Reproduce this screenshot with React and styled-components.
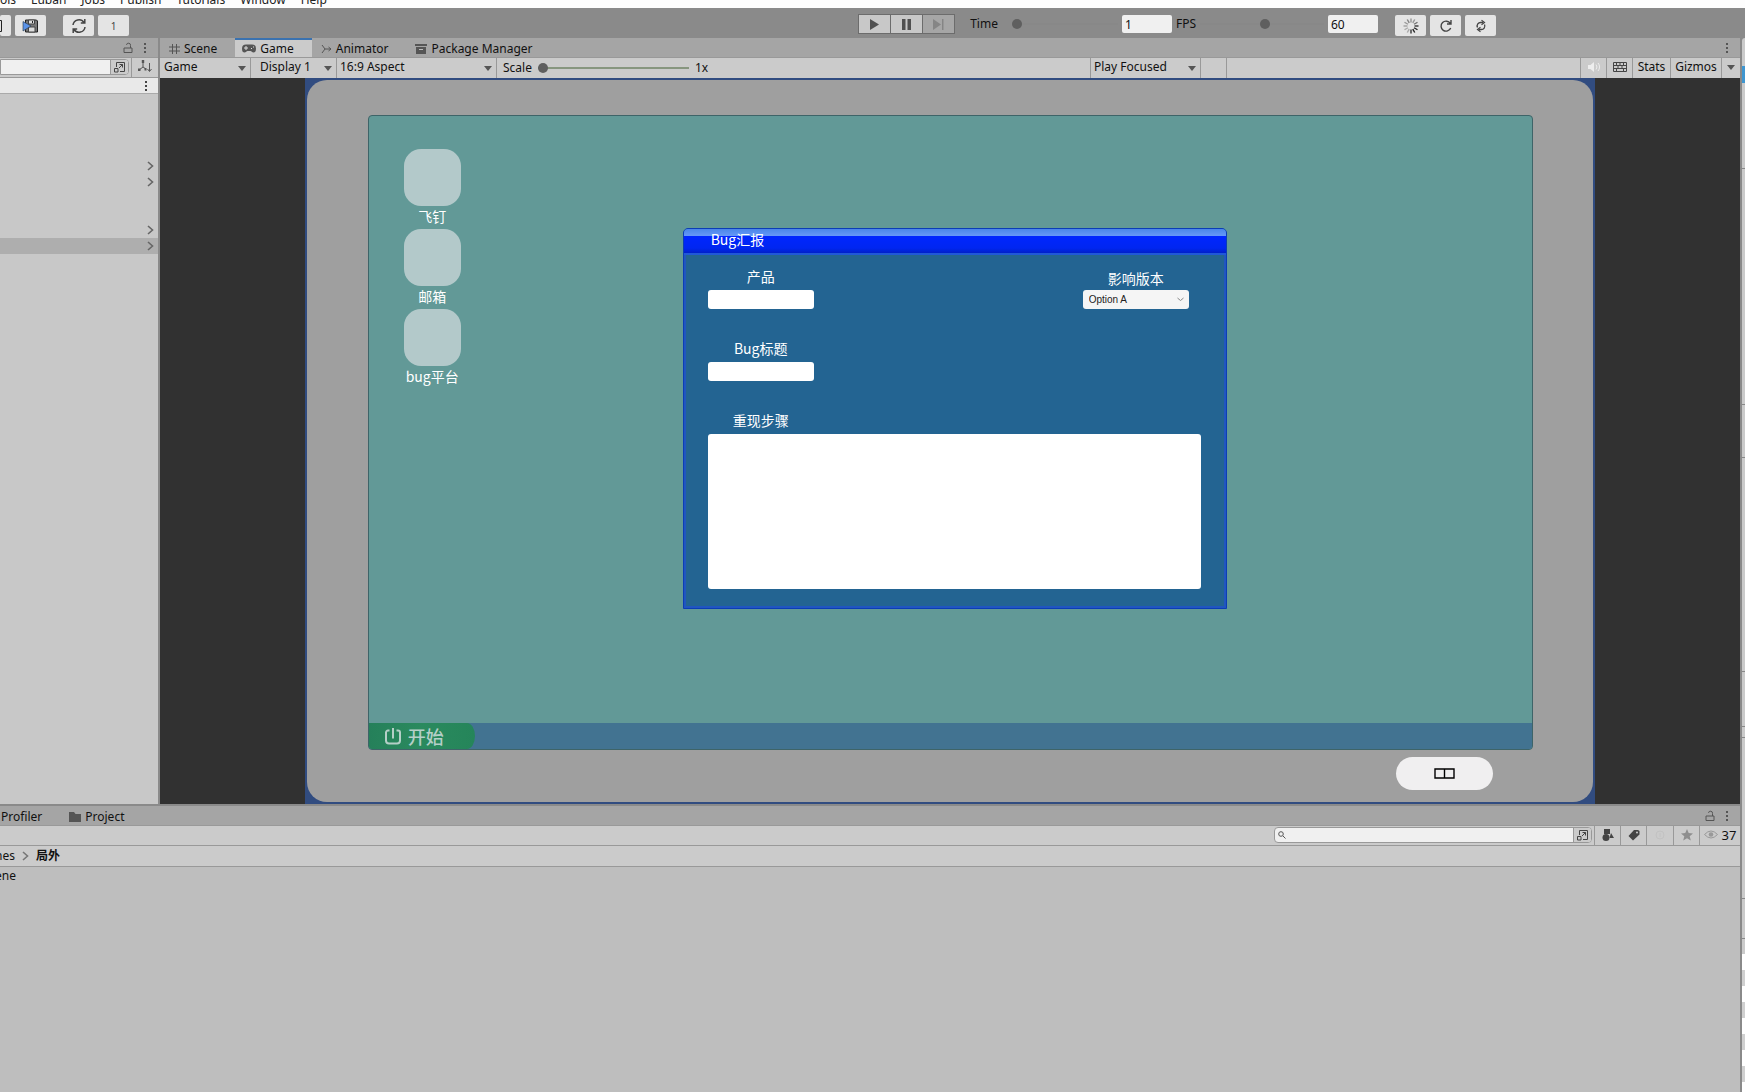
import React, { useState } from 'react';
import styled, { createGlobalStyle } from 'styled-components';

const GlobalStyle = createGlobalStyle`
  * {
    box-sizing: border-box;
  }
  body {
    margin: 0;
    background: #c0c0c0;
    color: #111;
    font-family: 'Noto Sans', 'Noto Sans CJK SC', sans-serif;
    font-size: 12px;
    line-height: 16px;
  }
  button, input, select, textarea {
    font: inherit;
    color: inherit;
    margin: 0;
    padding: 0;
    border: 0;
    border-radius: 0;
    outline: 0;
  }
  svg {
    display: block;
    flex: none;
  }
`;

//  //  //  //  //  //  //
// PAGE STRUCTURE       //
//  //  //  //  //  //  //

const Editor = styled.div`
  display: flex;
  flex-direction: column;
  height: 100vh;
  overflow: hidden;
`;

const MenuBar = styled.nav`
  display: flex;
  flex: none;
  align-items: flex-end;
  gap: 15px;
  height: 8px;
  overflow: hidden;
  background: #fdfdfd;
`;

const MenuLink = styled.a`
  color: #222;
  text-decoration: none;
  line-height: 16px;
`;

const Toolbar = styled.header`
  display: flex;
  flex: none;
  justify-content: space-between;
  height: 30px;
  padding: 0 249px 0 0;
  background: #8a8a8a;
`;

const ToolGroup = styled.div`
  display: flex;
  align-items: flex-start;
  gap: 4px;
  padding-top: 7px;
`;

const ToolButton = styled.button`
  display: flex;
  align-items: center;
  justify-content: ${(props) => props.justify || 'center'};
  width: ${(props) => props.width || 31}px;
  height: 21px;
  border-radius: 2px;
  background: #e4e4e4;
  color: #444;
  font-size: 10px;
`;

const ToolSpacer = styled.span`
  width: ${(props) => props.width}px;
`;

const PlayButtons = styled.div`
  display: flex;
  gap: 1px;
  height: 20px;
  margin: -1px 11px 0 0;
  padding: 1px;
  background: #6c6c6c;
`;

const PlayButton = styled.button`
  display: flex;
  align-items: center;
  justify-content: center;
  width: 31px;
  background: ${(props) => (props.disabled ? '#a6a6a6' : '#c8c8c8')};
  color: ${(props) => (props.disabled ? '#858585' : '#505050')};
`;

const ToolLabel = styled.label`
  line-height: 18px;
`;

const NumberField = styled.input`
  width: 50px;
  height: 18px;
  padding: 0 3px;
  border-radius: 2px;
  background: #f0f0f0;
`;

const Range = styled.input`
  appearance: none;
  width: ${(props) => props.width}px;
  height: 18px;
  background: linear-gradient(${(props) => props.track}, ${(props) => props.track}) no-repeat center / 100% 2px;
  &::-webkit-slider-thumb {
    appearance: none;
    width: 10px;
    height: 10px;
    border-radius: 50%;
    background: #5f5f5f;
  }
`;

const Workspace = styled.div`
  display: flex;
  flex: 1;
  min-height: 0;
  background: #8a8a8a;
`;

const MainColumn = styled.div`
  display: flex;
  flex: 1;
  flex-direction: column;
  min-width: 0;
`;

const TopPanels = styled.div`
  display: flex;
  flex: 1;
  gap: 2px;
  min-height: 0;
`;

const Panel = styled.section`
  display: flex;
  flex: ${(props) => (props.width ? `0 0 ${props.width}px` : '1')};
  flex-direction: column;
  min-width: 0;
  background: #c8c8c8;
`;

const BottomPanel = styled(Panel)`
  flex: none;
  height: 288px;
  background: #bebebe;
`;

const TabBar = styled.div`
  display: flex;
  flex: none;
  align-items: stretch;
  height: ${(props) => props.height || 19}px;
  padding-right: 11px;
  background: #a5a5a5;
  ${(props) => props.line && 'border-top: 2px solid #8a8a8a;'}
`;

const Tab = styled.button`
  display: flex;
  align-items: center;
  gap: 4px;
  padding: ${(props) => (props.selected ? '0 18px 0 7px' : '2px 18px 0 9px')};
  border-top: ${(props) => (props.selected ? '2px solid #3a72b0' : '0')};
  background: ${(props) => (props.selected ? '#cbcbcb' : 'transparent')};
  white-space: nowrap;
  svg {
    color: #555;
  }
`;

const CutTab = styled(Tab)`
  padding-left: 1px;
`;

const TabTools = styled.div`
  display: flex;
  align-items: center;
  gap: 10px;
  margin-left: auto;
  color: #555;
`;

const PlainButton = styled.button`
  display: flex;
  align-items: center;
  justify-content: center;
  background: transparent;
`;

const Strip = styled.div`
  display: flex;
  flex: none;
  align-items: stretch;
  height: ${(props) => props.height || 21}px;
  background: #cbcbcb;
  border-top: 1px solid #999;
  ${(props) => props.line && 'border-bottom: 1px solid #999;'}
`;

const Cell = styled.div`
  display: flex;
  align-items: center;
  justify-content: ${(props) => props.justify || 'flex-start'};
  flex: ${(props) => (props.width ? `0 0 ${props.width}px` : '1')};
  gap: 6px;
  min-width: 0;
  padding: 0 ${(props) => props.pad || 0}px 1px;
  border-right: 1px solid #999;
`;

const CellButton = styled.button`
  display: flex;
  align-items: center;
  justify-content: center;
  gap: 4px;
  flex: 0 0 ${(props) => props.width}px;
  padding-bottom: 2px;
  border-right: ${(props) => (props.last ? '0' : '1px solid #999')};
  background: transparent;
  color: ${(props) => props.tone || '#111'};
`;

const DropDown = styled.div`
  display: grid;
  flex: 0 0 ${(props) => props.width}px;
  align-items: center;
  border-right: 1px solid #999;
  > * {
    grid-area: 1 / 1;
  }
  svg {
    justify-self: end;
    margin-right: ${(props) => (props.form ? 5 : 4)}px;
    pointer-events: none;
    color: #555;
  }
`;

const DropSelect = styled.select`
  appearance: none;
  width: 100%;
  height: 18px;
  padding-left: ${(props) => props.indent || 4}px;
  background: transparent;
`;

const StripSelect = styled(DropSelect)`
  padding-bottom: 2px;
`;

//  //  //  //  //  //  //
// HIERARCHY            //
//  //  //  //  //  //  //

const SearchBox = styled.div`
  display: flex;
  align-items: center;
  flex: ${(props) => (props.width ? `0 0 ${props.width}px` : '1')};
  min-width: 0;
  height: 16px;
  margin-right: 2px;
  overflow: hidden;
  border: 1px solid #999;
  border-radius: ${(props) => (props.width ? '4px' : '0 4px 4px 0')};
  background: #f0f0f0;
  > svg {
    margin: 0 3px;
    color: #555;
  }
`;

const SearchInput = styled.input`
  flex: 1;
  min-width: 0;
  height: 14px;
  background: transparent;
`;

const PickerButton = styled.button`
  display: flex;
  flex: none;
  align-items: center;
  justify-content: center;
  width: 18px;
  height: 14px;
  border-left: 1px solid #999;
  background: #cbcbcb;
  color: #444;
`;

const SceneHeader = styled.div`
  display: flex;
  flex: none;
  align-items: center;
  justify-content: flex-end;
  height: 17px;
  padding-right: 10px;
  background: #e9e9e9;
  border-top: 1px solid #999;
  border-bottom: 1px solid #aaa;
  color: #444;
`;

const Tree = styled.ul`
  margin: 0;
  padding: 0;
  list-style: none;
`;

const TreeRow = styled.li`
  display: flex;
  align-items: center;
  justify-content: flex-end;
  height: 16px;
  padding-right: 4px;
  background: ${(props) => (props.selected ? '#aeaeae' : 'transparent')};
  color: #666;
`;

//  //  //  //  //  //  //
// GAME VIEW            //
//  //  //  //  //  //  //

const GameView = styled.div`
  display: flex;
  flex: 1;
  justify-content: center;
  min-height: 0;
  background: #313131;
`;

const Camera = styled.div`
  height: 100%;
  max-width: 100%;
  aspect-ratio: 16 / 9;
  padding: 2px;
  background: #314c80;
`;

const Monitor = styled.div`
  display: flex;
  flex-direction: column;
  height: 100%;
  padding: 35px 60px 0 61px;
  border-radius: 20px;
  background: #9f9f9f;
`;

const Desktop = styled.div`
  position: relative;
  display: flex;
  flex: 1;
  flex-direction: column;
  justify-content: space-between;
  border: 1px solid #3e6468;
  border-radius: 4px;
  overflow: hidden;
  background: #629997;
  font-family: 'Noto Sans CJK SC', sans-serif;
`;

const Shortcuts = styled.div`
  display: flex;
  flex-direction: column;
  align-items: flex-start;
  padding: 33px 0 0 35px;
`;

const Shortcut = styled.button`
  display: flex;
  flex-direction: column;
  align-items: center;
  gap: 1px;
  width: 57px;
  height: 80px;
  background: transparent;
  color: #fff;
  font-size: 14px;
  line-height: 18px;
  white-space: nowrap;
`;

const ShortcutTile = styled.span`
  width: 57px;
  height: 57px;
  border-radius: 17px;
  background: #b3c9ca;
`;

const Taskbar = styled.div`
  display: flex;
  height: 26px;
  background: #427391;
`;

const StartButton = styled.button`
  display: flex;
  align-items: center;
  gap: 6px;
  width: 106px;
  padding-left: 15px;
  border-radius: 0 8px 8px 0 / 0 13px 13px 0;
  background: linear-gradient(90deg, #25805a, #2a8a5e 50%, #25855a);
  color: #b5cfc8;
  font-size: 18px;
  font-weight: 500;
  line-height: 24px;
`;

const MonitorBase = styled.div`
  display: flex;
  flex: none;
  justify-content: flex-end;
  height: 52px;
  padding: 7px 40px 0 0;
`;

const PowerPill = styled.button`
  display: flex;
  align-items: center;
  justify-content: center;
  width: 97px;
  height: 33px;
  border-radius: 17px;
  background: #f0eff0;
  color: #000;
`;

const BugWindow = styled.form`
  position: absolute;
  top: 112px;
  left: 314px;
  width: 544px;
  overflow: hidden;
  border: 1px solid #0c3db5;
  border-radius: 5px 5px 0 0;
  background: #236492;
  box-shadow: inset 0 0 0 2px #2056c0;
  color: #fff;
  font-size: 14px;
  line-height: 18px;
`;

const BugTitle = styled.h1`
  height: 26px;
  margin: 0;
  padding: 1px 27px;
  border-bottom: 2px solid #2058d8;
  background: linear-gradient(#4a86e8, #6698f8 7px, #0026ff 7px, #0026f0 80%, #0020c8);
  font-size: 14px;
  font-weight: 400;
  line-height: 18px;
`;

const BugBody = styled.div`
  display: flex;
  flex-direction: column;
  gap: 30px;
  padding: 12px 25px 19px 24px;
`;

const BugRow = styled.div`
  display: flex;
  align-items: flex-end;
  justify-content: space-between;
  padding-right: 12px;
`;

const Field = styled.div`
  display: flex;
  flex-direction: column;
  gap: ${(props) => (props.tight ? 3 : 5)}px;
`;

const FieldLabel = styled.label`
  width: 106px;
  text-align: center;
`;

const TextField = styled.input`
  width: 106px;
  height: 19px;
  padding: 0 5px;
  border-radius: 3px;
  background: #fff;
  color: #222;
  font-size: 10px;
`;

const StepsField = styled.textarea`
  display: block;
  width: 100%;
  height: 155px;
  padding: 4px 5px;
  resize: none;
  border-radius: 3px;
  background: #fff;
  color: #222;
  font-size: 10px;
`;

const VersionDrop = styled(DropDown)`
  flex: none;
  width: 106px;
  height: 19px;
  border: 0;
  border-radius: 3px;
  background: #f5f5f5;
`;

const VersionSelect = styled(DropSelect)`
  color: #222;
  font-family: 'Liberation Sans', sans-serif;
  font-size: 10px;
`;

//  //  //  //  //  //  //
// PROJECT              //
//  //  //  //  //  //  //

// the column is scrolled a little to the right
const Crumbs = styled.div`
  display: flex;
  align-items: center;
  gap: 7px;
  margin-left: -5px;
  svg {
    color: #777;
  }
`;

const CrumbLink = styled.a`
  color: #111;
  text-decoration: none;
`;

const Current = styled.strong`
  font-weight: 700;
`;

const FileRow = styled.div`
  margin-left: -5px;
  line-height: 18px;
`;

const Count = styled.span`
  font-size: 13px;
`;

// edge of the docked inspector on the right
const InspectorEdge = styled.aside`
  display: flex;
  flex: 0 0 3px;
  flex-direction: column;
  margin-left: 2px;
  border-top-left-radius: 3px;
  background: #cbcbcb;
`;

const EdgeBlock = styled.span`
  flex: 0 0 ${(props) => props.height}px;
  background: ${(props) => props.color || 'transparent'};
  border-bottom: ${(props) => (props.line ? '1px solid #888' : '0')};
`;

const EdgeStripes = styled.span`
  flex: 1;
  background: repeating-linear-gradient(#fff 0 16px, #d0d0d0 16px 32px);
`;

//  //  //  //  //  //  //
// ICONS                //
//  //  //  //  //  //  //

function Icon({ w = 12, h = 12, children }) {
  return (
    <svg
      width={w}
      height={h}
      viewBox={`0 0 ${w} ${h}`}
      fill="none"
      stroke="currentColor"
      aria-hidden="true"
    >
      {children}
    </svg>
  );
}

const Kebab = () => (
  <Icon w={4} h={12}>
    <path d="M1 1h2v2H1zM1 5h2v2H1zM1 9h2v2H1z" fill="currentColor" stroke="none" />
  </Icon>
);

const Lock = () => (
  <Icon w={10} h={12}>
    <path d="M1 6h8v4.500H1zM7.500 6V3.500a2 2 0 0 0-4-.6" />
  </Icon>
);

const Caret = () => (
  <Icon w={8} h={5}>
    <path d="M0 0h8L4 5z" fill="currentColor" stroke="none" />
  </Icon>
);

const Chevron = () => (
  <Icon w={7} h={10}>
    <path d="M1 1l4.500 4L1 9" strokeWidth="1.600" />
  </Icon>
);

const Picker = () => (
  <Icon w={13} h={12}>
    <path d="M3.500 6V1.500h8v9H7M1.500 7.500h3.500v3.500H1.500zM6 7l3.500-3.500M6.500 3.500h3v3" />
  </Icon>
);

const SortIcon = () => (
  <Icon w={14} h={13}>
    <path d="M5 1v6M5 7L1 10M5 7l3 2M11.500 3v8M9.500 9l2 2.500 2-2.500" />
    <path d="M3.800 0h2.400v3H3.800zM0 8.500h2.500V11H0zM6.500 8h2v2.500h-2z" fill="currentColor" stroke="none" />
  </Icon>
);

const FloppyEdge = () => (
  <Icon w={3} h={14}>
    <path d="M0 1.500h1.500v11H0" stroke="#222" />
  </Icon>
);

const Floppy = () => (
  <Icon w={17} h={14}>
    <path d="M3.500 1h11l1 1v11h-12z" fill="#777" stroke="#222" />
    <path d="M6.500 1h6v4h-6zM6.500 8h6.500v5H6.500z" fill="#ddd" stroke="#444" />
    <path d="M10.500 2v2" stroke="#222" />
    <path d="M1 2.500L9 7l-8 5z" fill="#5b93e8" stroke="#234" strokeWidth=".6" />
  </Icon>
);

const Sync = () => (
  <Icon w={16} h={16}>
    <path d="M2 7a6 6 0 0 1 11-2.500M14 9a6 6 0 0 1-11 2.500M13.800 1v4H9.800M2.200 15v-4h4" strokeWidth="1.500" />
  </Icon>
);

const Reload = () => (
  <Icon w={14} h={14}>
    <path d="M11.700 9a5 5 0 1 1-.4-4.500M12 1v4H8" strokeWidth="1.400" />
  </Icon>
);

const Swap = () => (
  <Icon w={12} h={14}>
    <path d="M2.500 8.500a3.500 3.500 0 0 1 3.500-5h2M9.500 5.500a3.500 3.500 0 0 1-3.500 5H4" strokeWidth="1.300" />
    <path d="M6.500 1.200L9.500 3.500l-3 2.300M5.500 8.200L2.500 10.500l3 2.300" strokeWidth="1.200" />
  </Icon>
);

// spokes are darkest at the lower right
const Spinner = () => (
  <Icon w={16} h={16}>
    {[0.4, 0.4, 0.6, 0.9, 1, 1, 0.9, 0.3, 0.3, 0.35, 0.4, 0.5].map((opacity, n) => (
      <path
        key={n}
        d="M8 .5v4"
        strokeWidth="1.400"
        stroke="#222"
        strokeOpacity={opacity}
        transform={`rotate(${n * 30} 8 8)`}
      />
    ))}
  </Icon>
);

const GridIcon = () => (
  <Icon w={11} h={12}>
    <path d="M3.500 1v10M7.500 1v10M0 4h11M0 8h11" />
  </Icon>
);

const Pad = () => (
  <Icon w={14} h={9}>
    <path d="M4 .5h6a4 4 0 0 1 4 4c0 3-1 4-2.500 4S9.500 7 8.500 7h-3C4.500 7 4 8.500 2.500 8.500S0 7.500 0 4.500a4 4 0 0 1 4-4z" fill="currentColor" stroke="none" />
    <path d="M2 4h4M4 2v4M9 4.500h1M11 3h1" stroke="#ddd" />
  </Icon>
);

const AnimatorIcon = () => (
  <Icon w={11} h={10}>
    <path d="M1 1l3 4-3 4M4 5h6M7.500 3L10 5 7.500 7" />
  </Icon>
);

const PackageIcon = () => (
  <Icon w={12} h={10}>
    <path d="M0 0h12v2H0zM1 3h10v7H1z" fill="currentColor" stroke="none" />
    <path d="M4 5.500h4" stroke="#bbb" />
  </Icon>
);

const Folder = () => (
  <Icon w={12} h={10}>
    <path d="M0 0h5l1.500 2H12v8H0z" fill="currentColor" stroke="none" />
  </Icon>
);

const Speaker = () => (
  <Icon w={14} h={12}>
    <path d="M1 4h2.500L7 1v10L3.500 8H1z" fill="currentColor" stroke="none" />
    <path d="M9 3.500a4 4 0 0 1 0 5M11 2a6 6 0 0 1 0 8" />
  </Icon>
);

const Keyboard = () => (
  <Icon w={14} h={10}>
    <path d="M.5.5h13v9H.5zM0 3.500h14M0 6.500h14M3.500 0v3M7 0v3M10.500 0v3M5 3.500v3M9 3.500v3M3.500 6.500v3M10.500 6.500v3" />
  </Icon>
);

const Power = () => (
  <Icon w={18} h={18}>
    <path d="M5.500 3.500H4A2 2 0 0 0 2 5.500v8a3 3 0 0 0 3 3h8a3 3 0 0 0 3-3v-8a2 2 0 0 0-2-2h-1.500M9 1v10.500" strokeWidth="2" />
  </Icon>
);

const PillBoxes = () => (
  <Icon w={21} h={11}>
    <path d="M1 1h19v9H1zM10.500 1v9" strokeWidth="1.400" />
  </Icon>
);

const Lens = () => (
  <Icon w={8} h={8}>
    <circle cx="3" cy="3" r="2.300" />
    <path d="M5 5l2.500 2.500" />
  </Icon>
);

const Shapes = () => (
  <Icon w={12} h={12}>
    <path d="M2 0h6v5H2zM9 4l3 5H7.500z" fill="currentColor" stroke="none" />
    <circle cx="4" cy="8.500" r="3.500" fill="currentColor" stroke="none" />
  </Icon>
);

const TagIcon = () => (
  <Icon w={12} h={12}>
    <path d="M6 1h4l1.500 1v3.500L5 11.500.5 7z" fill="currentColor" stroke="none" />
    <circle cx="9" cy="3.500" r="1" fill="#cbcbcb" stroke="none" />
  </Icon>
);

const Star = () => (
  <Icon w={12} h={12}>
    <path d="M6 0l1.700 4.100 4.300.3-3.300 2.800 1.100 4.300L6 9.200l-3.800 2.300 1.100-4.300L0 4.400l4.300-.3z" fill="currentColor" stroke="none" />
  </Icon>
);

const Info = () => (
  <Icon w={12} h={12}>
    <circle cx="6" cy="6" r="4" />
    <path d="M6 4v4" />
  </Icon>
);

const Eye = () => (
  <Icon w={14} h={9}>
    <path d="M.5 4.500Q7-2.500 13.500 4.500 7 11.500.5 4.500z" stroke="#999" />
    <circle cx="7" cy="4.500" r="2.300" fill="#999" stroke="none" />
  </Icon>
);

//  //  //  //  //  //  //
// COMPONENTS           //
//  //  //  //  //  //  //

const menus = ['ols', 'Luban', 'Jobs', 'Publish', 'Tutorials', 'Window', 'Help'];

const tabs = [
  { name: 'Scene', icon: <GridIcon /> },
  { name: 'Game', icon: <Pad /> },
  { name: 'Animator', icon: <AnimatorIcon /> },
  { name: 'Package Manager', icon: <PackageIcon /> },
];

const treeRows = [
  {}, {}, {}, {}, { open: true }, { open: true }, {}, {}, { open: true }, { open: true, selected: true },
];

const shortcuts = ['飞钉', '邮箱', 'bug平台'];

const edgeLines = [86, 236, 53, 214, 55, 11, 161, 40];

function ViewDrop({ label, width, indent }) {
  return (
    <DropDown width={width}>
      <StripSelect aria-label={label} indent={indent}>
        <option>{label}</option>
      </StripSelect>
      <Caret />
    </DropDown>
  );
}

function TopBar() {
  return (
    <Toolbar>
      <ToolGroup>
        <ToolButton width={11} justify="flex-start" aria-label="Save"><FloppyEdge /></ToolButton>
        <ToolButton aria-label="Save and play"><Floppy /></ToolButton>
        <ToolSpacer width={9} />
        <ToolButton aria-label="Refresh"><Sync /></ToolButton>
        <ToolButton>1</ToolButton>
      </ToolGroup>
      <ToolGroup>
        <PlayButtons>
          <PlayButton aria-label="Play">
            <Icon w={9} h={11}><path d="M0 0l9 5.500L0 11z" fill="currentColor" stroke="none" /></Icon>
          </PlayButton>
          <PlayButton aria-label="Pause">
            <Icon w={9} h={11}><path d="M0 0h3.500v11H0zM5.500 0H9v11H5.500z" fill="currentColor" stroke="none" /></Icon>
          </PlayButton>
          <PlayButton aria-label="Step" disabled>
            <Icon w={11} h={11}><path d="M0 0l8 5.500L0 11zM9 0h1.500v11H9z" fill="currentColor" stroke="none" /></Icon>
          </PlayButton>
        </PlayButtons>
        <ToolLabel htmlFor="time">Time</ToolLabel>
        <ToolSpacer width={6} />
        <Range id="time-range" aria-label="Time scale" type="range" width={106} track="#888" defaultValue={0} />
        <NumberField id="time" defaultValue="1" />
        <ToolLabel htmlFor="fps">FPS</ToolLabel>
        <Range id="fps-range" aria-label="Frame rate" type="range" width={124} track="#888" defaultValue={53} />
        <NumberField id="fps" defaultValue="60" />
        <ToolSpacer width={9} />
        <ToolButton aria-label="Loading"><Spinner /></ToolButton>
        <ToolButton aria-label="Reload"><Reload /></ToolButton>
        <ToolButton aria-label="Swap"><Swap /></ToolButton>
      </ToolGroup>
    </Toolbar>
  );
}

function Hierarchy() {
  return (
    <Panel width={158}>
      <TabBar>
        <TabTools>
          <PlainButton aria-label="Lock"><Lock /></PlainButton>
          <PlainButton aria-label="Options"><Kebab /></PlainButton>
        </TabTools>
      </TabBar>
      <Strip height={20}>
        <Cell width={132}>
          <SearchBox>
            <SearchInput aria-label="Search hierarchy" />
            <PickerButton aria-label="Pick"><Picker /></PickerButton>
          </SearchBox>
        </Cell>
        <CellButton width={26} last aria-label="Sort" tone="#555"><SortIcon /></CellButton>
      </Strip>
      <SceneHeader><Kebab /></SceneHeader>
      <Tree>
        {treeRows.map((row, i) => (
          <TreeRow key={i} selected={row.selected}>
            {row.open && <Chevron />}
          </TreeRow>
        ))}
      </Tree>
    </Panel>
  );
}

function BugReport() {
  return (
    <BugWindow>
      <BugTitle>Bug汇报</BugTitle>
      <BugBody>
        <BugRow>
          <Field>
            <FieldLabel htmlFor="product">产品</FieldLabel>
            <TextField id="product" />
          </Field>
          <Field tight>
            <FieldLabel htmlFor="version">影响版本</FieldLabel>
            <VersionDrop form>
              <VersionSelect id="version" indent={6}>
                <option>Option A</option>
              </VersionSelect>
              <Icon w={7} h={5}><path d="M.5 1l3 2.500 3-2.500" stroke="#888" /></Icon>
            </VersionDrop>
          </Field>
        </BugRow>
        <Field>
          <FieldLabel htmlFor="title">Bug标题</FieldLabel>
          <TextField id="title" />
        </Field>
        <Field>
          <FieldLabel htmlFor="steps">重现步骤</FieldLabel>
          <StepsField id="steps" />
        </Field>
      </BugBody>
    </BugWindow>
  );
}

function Game() {
  const [active, setActive] = useState('Game');

  return (
    <Panel>
      <TabBar>
        {tabs.map((tab) => (
          <Tab key={tab.name} selected={tab.name === active} onClick={() => setActive(tab.name)}>
            {tab.icon}
            {tab.name}
          </Tab>
        ))}
        <TabTools>
          <PlainButton aria-label="Options"><Kebab /></PlainButton>
        </TabTools>
      </TabBar>
      <Strip>
        <ViewDrop label="Game" width={91} />
        <ViewDrop label="Display 1" width={86} indent={9} />
        <ViewDrop label="16:9 Aspect" width={160} indent={3} />
        <Cell pad={6}>
          <label htmlFor="scale">Scale</label>
          <Range id="scale" type="range" width={151} track="#87967f" defaultValue={0} />
          <span>1x</span>
        </Cell>
        <ViewDrop label="Play Focused" width={110} indent={3} />
        <Cell width={26} />
        <Cell width={354} />
        <CellButton width={26} aria-label="Mute" tone="#eee"><Speaker /></CellButton>
        <CellButton width={26} aria-label="Shortcuts" tone="#444"><Keyboard /></CellButton>
        <CellButton width={38}>Stats</CellButton>
        <CellButton width={51}>Gizmos</CellButton>
        <CellButton width={18} last aria-label="Gizmo options" tone="#555"><Caret /></CellButton>
      </Strip>
      <GameView>
        <Camera>
          <Monitor>
            <Desktop>
              <Shortcuts>
                {shortcuts.map((name) => (
                  <Shortcut key={name}>
                    <ShortcutTile />
                    {name}
                  </Shortcut>
                ))}
              </Shortcuts>
              <Taskbar>
                <StartButton>
                  <Power />
                  开始
                </StartButton>
              </Taskbar>
              <BugReport />
            </Desktop>
            <MonitorBase>
              <PowerPill aria-label="Power"><PillBoxes /></PowerPill>
            </MonitorBase>
          </Monitor>
        </Camera>
      </GameView>
    </Panel>
  );
}

function Project() {
  return (
    <BottomPanel>
      <TabBar line height={21}>
        <CutTab>Profiler</CutTab>
        <Tab>
          <Folder />
          Project
        </Tab>
        <TabTools>
          <PlainButton aria-label="Lock"><Lock /></PlainButton>
          <PlainButton aria-label="Options"><Kebab /></PlainButton>
        </TabTools>
      </TabBar>
      <Strip height={20}>
        <Cell justify="flex-end">
          <SearchBox width={318}>
            <Lens />
            <SearchInput aria-label="Search project" />
            <PickerButton aria-label="Pick"><Picker /></PickerButton>
          </SearchBox>
        </Cell>
        <CellButton width={26} aria-label="Filter by type" tone="#444"><Shapes /></CellButton>
        <CellButton width={26} aria-label="Filter by label" tone="#444"><TagIcon /></CellButton>
        <CellButton width={27} aria-label="Log" tone="#c2c2c2"><Info /></CellButton>
        <CellButton width={26} aria-label="Favorites" tone="#8e8e8e"><Star /></CellButton>
        <CellButton width={40} last>
          <Eye />
          <Count>37</Count>
        </CellButton>
      </Strip>
      <Strip height={22} line>
        <Crumbs>
          <CrumbLink href="#scenes">nes</CrumbLink>
          <Chevron />
          <Current>局外</Current>
        </Crumbs>
      </Strip>
      <FileRow>ene</FileRow>
    </BottomPanel>
  );
}

export default function App() {
  return (
    <Editor>
      <GlobalStyle />
      <MenuBar>
        {menus.map((name) => (
          <MenuLink key={name} href={`#${name}`}>{name}</MenuLink>
        ))}
      </MenuBar>
      <TopBar />
      <Workspace>
        <MainColumn>
          <TopPanels>
            <Hierarchy />
            <Game />
          </TopPanels>
          <Project />
        </MainColumn>
        <InspectorEdge>
          <EdgeBlock height={28} />
          <EdgeBlock height={17} color="#3f96d0" />
          {edgeLines.map((height, i) => (
            <EdgeBlock key={i} height={height} line />
          ))}
          <EdgeBlock height={15} />
          <EdgeStripes />
        </InspectorEdge>
      </Workspace>
    </Editor>
  );
}
